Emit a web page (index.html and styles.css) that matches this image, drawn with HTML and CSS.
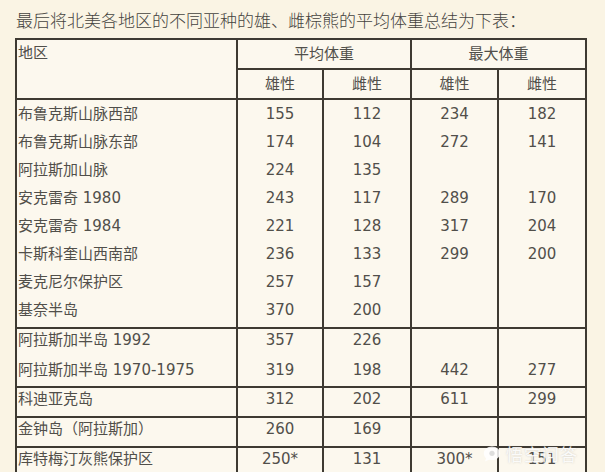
FILE: index.html
```html
<!DOCTYPE html>
<html lang="zh">
<head>
<meta charset="utf-8">
<link rel="stylesheet" href="styles.css">
</head>
<body>
<p class="title">最后将北美各地区的不同亚种的雄、雌棕熊的平均体重总结为下表：</p>
<div class="table">
  <div class="cell head region">地区</div>
  <div class="cell head span2">平均体重</div>
  <div class="cell head span2">最大体重</div>
  <div class="cell head sub">雄性</div>
  <div class="cell head sub">雌性</div>
  <div class="cell head sub">雄性</div>
  <div class="cell head sub">雌性</div>

  <div class="cell name g1">
    <div class="ln">布鲁克斯山脉西部</div>
    <div class="ln">布鲁克斯山脉东部</div>
    <div class="ln">阿拉斯加山脉</div>
    <div class="ln">安克雷奇 1980</div>
    <div class="ln">安克雷奇 1984</div>
    <div class="ln">卡斯科奎山西南部</div>
    <div class="ln">麦克尼尔保护区</div>
    <div class="ln">基奈半岛</div>
  </div>
  <div class="cell num g1">
    <div class="ln">155</div><div class="ln">174</div><div class="ln">224</div><div class="ln">243</div>
    <div class="ln">221</div><div class="ln">236</div><div class="ln">257</div><div class="ln">370</div>
  </div>
  <div class="cell num g1">
    <div class="ln">112</div><div class="ln">104</div><div class="ln">135</div><div class="ln">117</div>
    <div class="ln">128</div><div class="ln">133</div><div class="ln">157</div><div class="ln">200</div>
  </div>
  <div class="cell num g1">
    <div class="ln">234</div><div class="ln">272</div><div class="ln"></div><div class="ln">289</div>
    <div class="ln">317</div><div class="ln">299</div>
  </div>
  <div class="cell num g1">
    <div class="ln">182</div><div class="ln">141</div><div class="ln"></div><div class="ln">170</div>
    <div class="ln">204</div><div class="ln">200</div>
  </div>

  <div class="cell name g2">
    <div class="ln">阿拉斯加半岛 1992</div>
    <div class="ln">阿拉斯加半岛 1970-1975</div>
  </div>
  <div class="cell num g2"><div class="ln">357</div><div class="ln">319</div></div>
  <div class="cell num g2"><div class="ln">226</div><div class="ln">198</div></div>
  <div class="cell num g2"><div class="ln"></div><div class="ln">442</div></div>
  <div class="cell num g2"><div class="ln"></div><div class="ln">277</div></div>

  <div class="cell name g3"><div class="ln">科迪亚克岛</div></div>
  <div class="cell num g3"><div class="ln">312</div></div>
  <div class="cell num g3"><div class="ln">202</div></div>
  <div class="cell num g3"><div class="ln">611</div></div>
  <div class="cell num g3"><div class="ln">299</div></div>

  <div class="cell name g3"><div class="ln">金钟岛（阿拉斯加）</div></div>
  <div class="cell num g3"><div class="ln">260</div></div>
  <div class="cell num g3"><div class="ln">169</div></div>
  <div class="cell num g3"><div class="ln"></div></div>
  <div class="cell num g3"><div class="ln"></div></div>

  <div class="cell name g3"><div class="ln">库特梅汀灰熊保护区</div></div>
  <div class="cell num g3"><div class="ln">250*</div></div>
  <div class="cell num g3"><div class="ln">131</div></div>
  <div class="cell num g3"><div class="ln">300*</div></div>
  <div class="cell num g3"><div class="ln">151</div></div>
</div>

<div class="watermark">
  <svg class="wm-icon" width="20" height="18" viewBox="0 0 20 18">
    <path d="M10 1.5c4.7 0 8.2 3 8.2 6.8s-3.5 6.8-8.2 6.8c-1 0-2-.1-2.9-.4L3 16.5l1-3.2C2.6 12 1.8 10.3 1.8 8.3 1.8 4.5 5.3 1.5 10 1.5z" fill="rgba(255,255,255,0.85)"/>
    <circle cx="10" cy="8.3" r="2.6" fill="rgba(200,200,200,0.6)"/>
  </svg>
  <span class="wm-text">悟空问答</span>
</div>
</body>
</html>
```
FILE: styles.css
```css
html, body {
  margin: 0;
  background: #faf4e4;
}
body {
  position: relative;
  padding: 8px 15px 0;
  font-family: "DejaVu Sans", "Noto Sans CJK SC", sans-serif;
  color: #514f4a;
  overflow: hidden;
  height: 464px;
}
.title {
  margin: 0 0 6px 1px;
  font-size: 17px;
  line-height: 24px;
  height: 24px;
  color: #45433e;
  font-family: "Noto Sans CJK SC", sans-serif;
  font-weight: 300;
  white-space: nowrap;
}
.table {
  display: grid;
  grid-template-columns: 219px 84px 86px 85px 86px;
  grid-template-rows: 28px 28px 227px 57px 28px 28px 40px;
  gap: 2px;
  padding: 2px;
  width: max-content;
  background: #3e3a32;
  font-size: 15px;
}
.cell {
  background: #fcf8ee;
  overflow: hidden;
}
.head {
  text-align: center;
  line-height: 28px;
}
.region {
  grid-row: span 2;
  text-align: left;
  line-height: 26px;
  padding-left: 1px;
}
.span2 {
  grid-column: span 2;
}
.name {
  padding-left: 1px;
  white-space: nowrap;
}
.num {
  text-align: center;
}
.g1 .ln {
  height: 28px;
  line-height: 28px;
}
.g2 .ln,
.g3 .ln {
  height: 22px;
  line-height: 22px;
}
.g2 .ln + .ln {
  margin-top: 8px;
}
.watermark {
  position: absolute;
  left: 482px;
  top: 441px;
  display: flex;
  align-items: center;
  gap: 4px;
}
.wm-text {
  font-family: "Noto Sans CJK SC", sans-serif;
  font-size: 17px;
  color: rgba(255, 255, 255, 0.88);
  text-shadow: 0 0 2px rgba(120, 120, 120, 0.35);
  letter-spacing: 1px;
}
```
